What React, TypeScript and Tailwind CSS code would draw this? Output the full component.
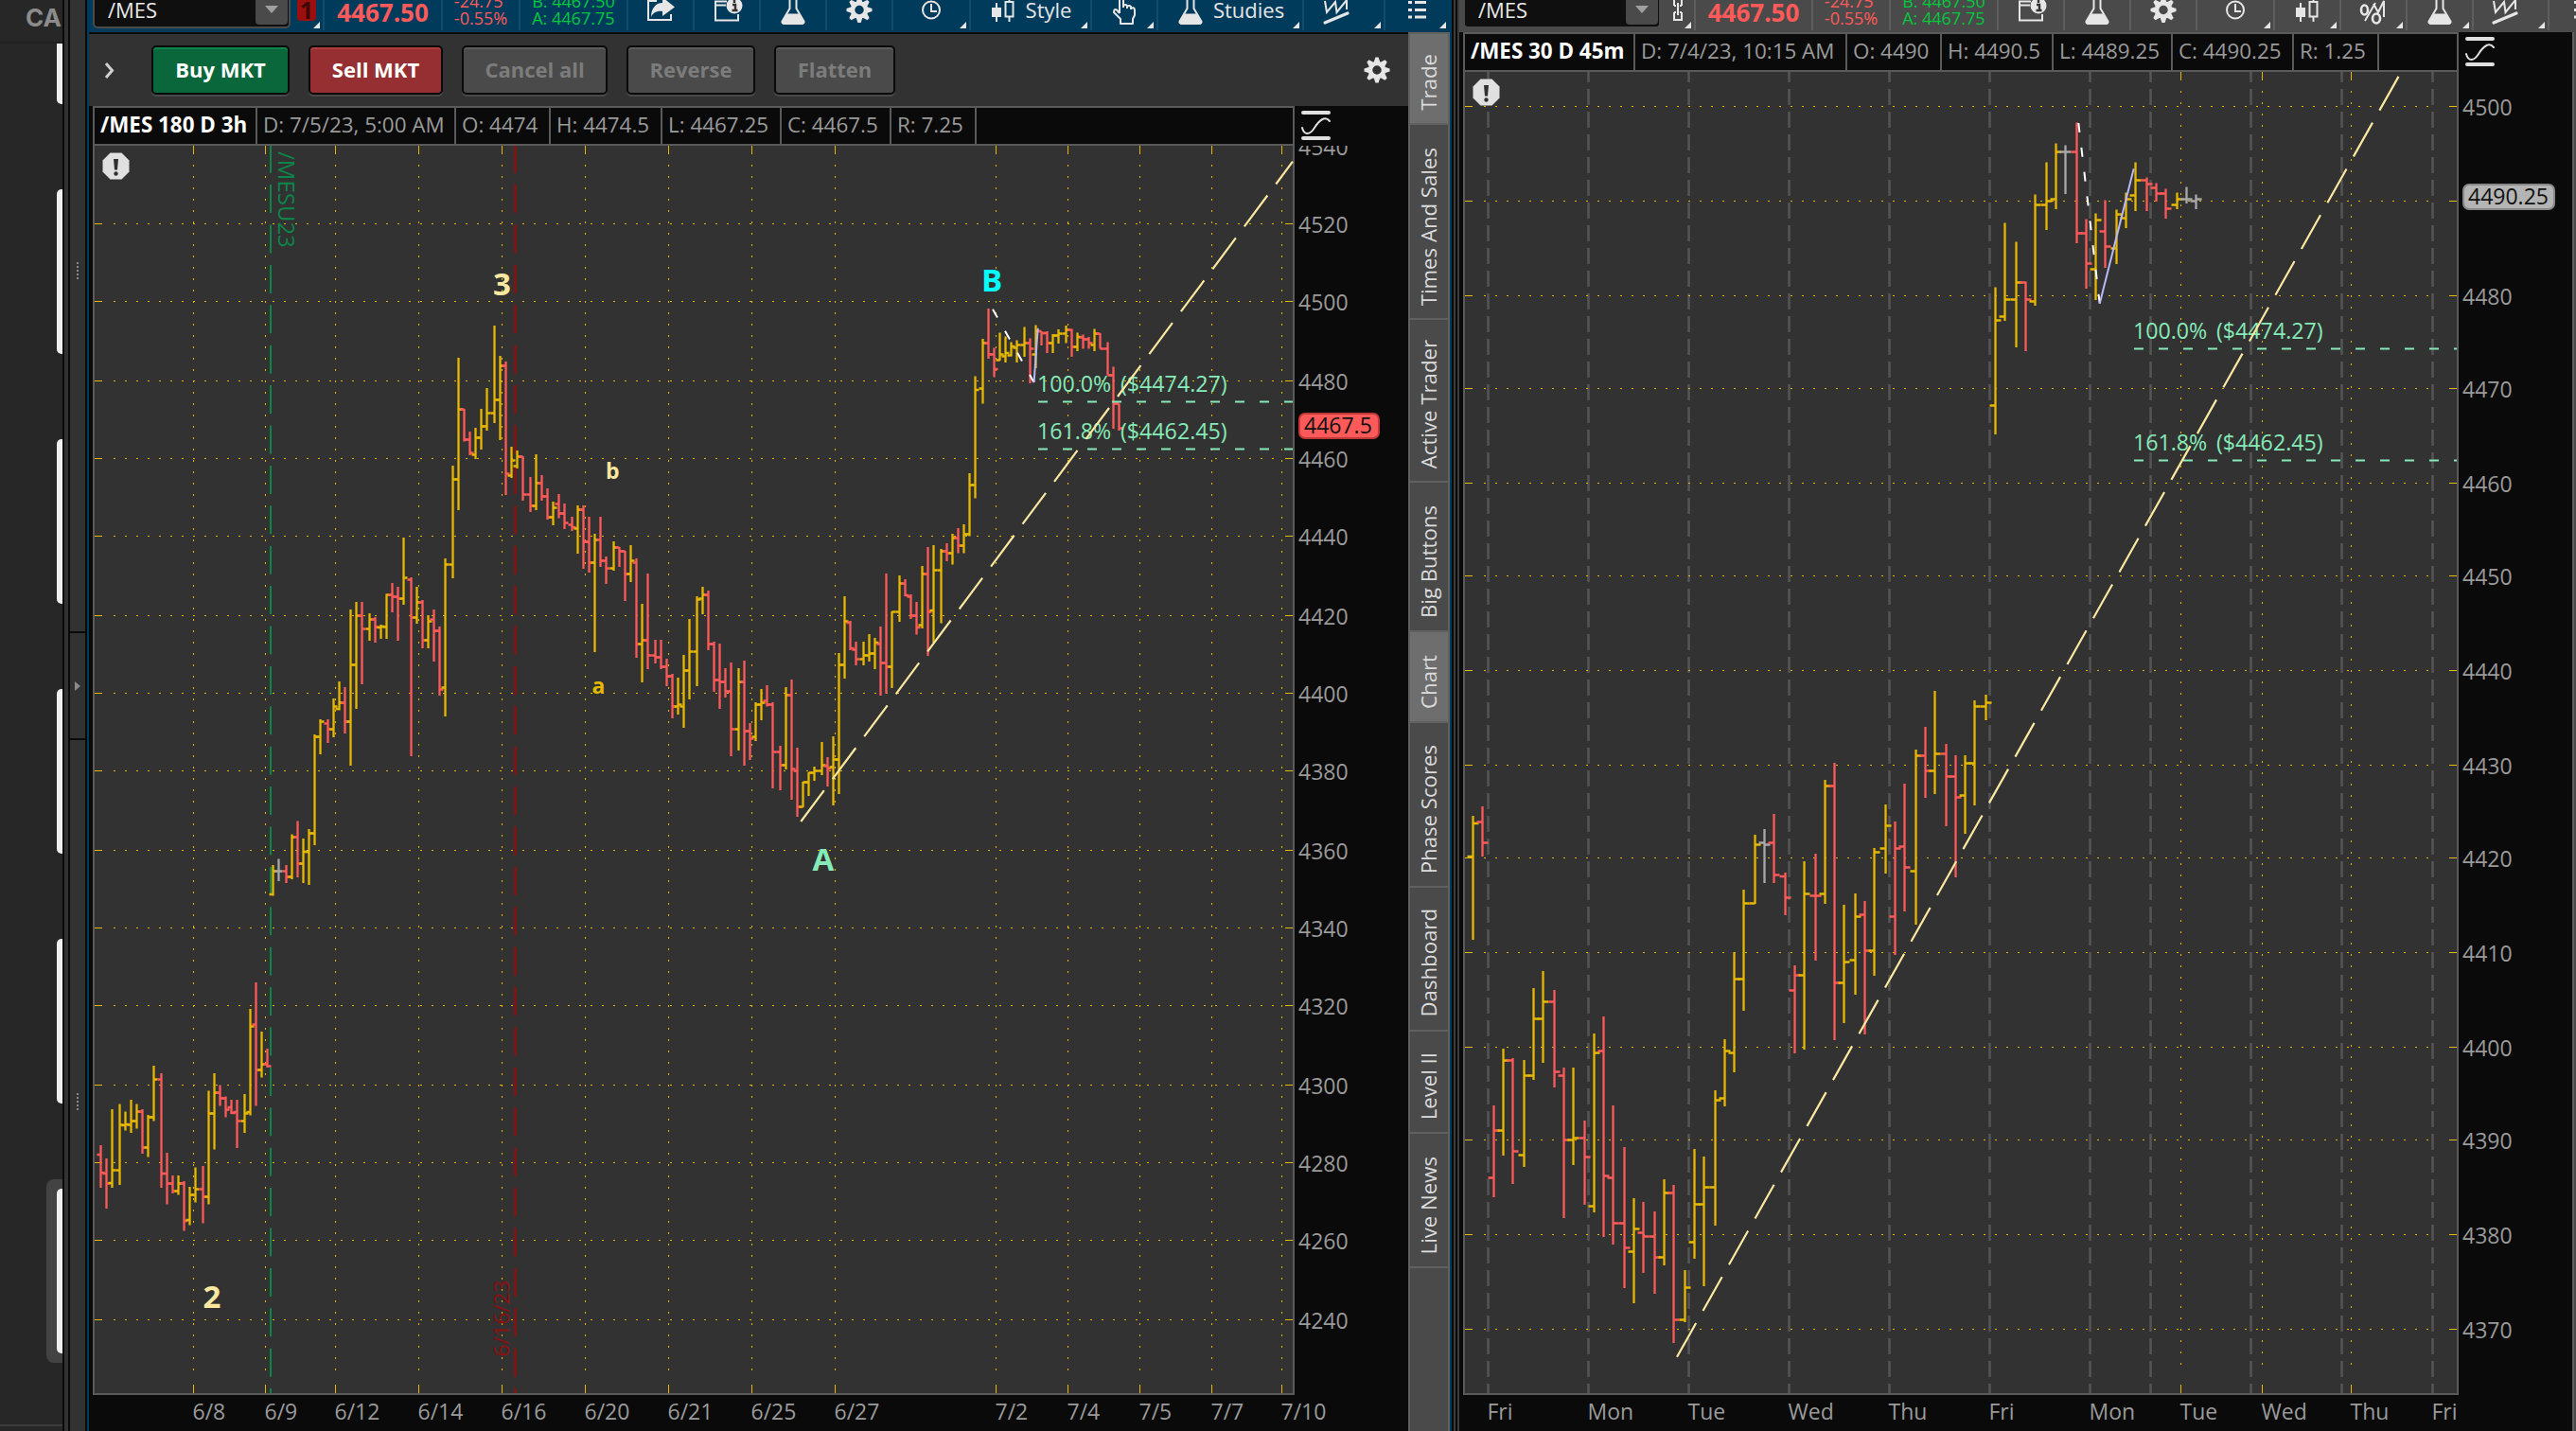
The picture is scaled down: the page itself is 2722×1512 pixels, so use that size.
import type { ReactNode } from 'react';
import clsx from 'clsx';

type Bar = [high: number, low: number, open: number, close: number];

interface GridLine {
	at: number;
	label?: string;
}

interface Line {
	x1: number;
	y1: number;
	x2: number;
	y2: number;
}

const YELLOW = '#e6b800';
const RED = '#ff5a5a';
const GRAY = '#a8a8a8';
const CREAM = '#fae8a0';
const MINT = '#86eab8';

const FONT = 'Open Sans, Noto Sans, sans-serif';

// Three hour bars, /MES 180 D
const bars3h: Bar[] = [
	[1210, 1255, 1220, 1239], [1224, 1277, 1240, 1250.5], [1172, 1255, 1250, 1236.5], [1166.5, 1252, 1236.5, 1188.5],
	[1174.5, 1194.5, 1189, 1188], [1162, 1197, 1188.5, 1184.5], [1166.5, 1192.5, 1184.5, 1174.5], [1172, 1219, 1174.5, 1212.5],
	[1178, 1222.5, 1212.5, 1180.5], [1126, 1184.5, 1180.5, 1140.5], [1134, 1255, 1140.5, 1240], [1218, 1272.5, 1240, 1250.5],
	[1242, 1261, 1250.5, 1258.5], [1242, 1262.5, 1258.5, 1250.5], [1248, 1300.5, 1250.5, 1290], [1254, 1294.5, 1289, 1262.5],
	[1233.5, 1270.5, 1262.5, 1256.5], [1232, 1292.5, 1256.5, 1264.5], [1152.5, 1272.5, 1264.5, 1176.5], [1134, 1214.5, 1176.5, 1154.5],
	[1146.5, 1168.5, 1154.5, 1160.5], [1158.5, 1180.5, 1160.5, 1172.5], [1162, 1177, 1170, 1176], [1162, 1213, 1175, 1184.5],
	[1156, 1197, 1184.5, 1176.5], [1066, 1178.5, 1175, 1084.5], [1038, 1168.5, 1082.5, 1130.5], [1090, 1138.5, 1130.5, 1124.5],
	[1108, 1128, 1124.5, 1126.5], [914, 946.5, 945, 920.5], [907.5, 931, 920.5, 920.5], [914, 933, 920.5, 926.5],
	[881.5, 929, 926.5, 884.5], [867.5, 927, 884.5, 912.5], [886, 933, 912.5, 900], [876, 935, 900, 880.5],
	[776, 893, 880.5, 778.5], [760, 797, 778.5, 762.5], [760, 785, 764.5, 770.5], [738, 779, 770.5, 746.5],
	[720, 750.5, 749, 742.5], [726, 775, 742.5, 762.5], [644, 809, 762.5, 702.5], [636, 749, 702.5, 650.5],
	[636, 723, 650.5, 664.5], [648, 677, 664.5, 654.5], [652, 679, 654.5, 662.5], [660, 675, 663, 662],
	[627.5, 675, 662.5, 628.5], [616, 647, 628.5, 630.5], [620, 677, 630.5, 632.5], [568, 639, 632.5, 610.5],
	[610, 799, 612.5, 652.5], [620, 659, 652.5, 636.5], [634, 685, 636.5, 676.5], [650, 685, 676.5, 656.5],
	[644, 699, 654.5, 666.5], [662, 735, 666.5, 728.5], [590, 757, 726.5, 596.5], [492, 611, 596.5, 506.5],
	[378, 539, 506.5, 432.5], [432, 466.5, 432.5, 464.5], [456, 481, 464.5, 478.5], [452, 485, 480.5, 462.5],
	[432, 475, 462.5, 450.5], [410, 455, 450.5, 436.5], [344, 447, 436.5, 422.5], [376, 465, 422.5, 386.5],
	[382, 523, 386.5, 500.5], [472, 505, 502.5, 486.5], [476, 495, 492.5, 482.5], [482, 529, 482.5, 522.5],
	[504, 541, 522.5, 534.5], [480, 539, 534.5, 510.5], [502, 529, 510.5, 524.5], [516, 549, 524.5, 546.5],
	[530, 555, 546.5, 536.5], [522, 547.5, 532.5, 542.5], [532, 559, 542.5, 552.5], [546, 561, 554.5, 557],
	[534, 585, 558.5, 538.5], [534, 601, 538.5, 572.5], [546, 605, 572.5, 594.5], [564, 689, 594.5, 570.5],
	[546, 599, 570.5, 592.5], [588, 617, 592.5, 600.5], [572, 603, 600.5, 578.5], [578, 599, 578.5, 582.5],
	[582, 635, 582.5, 606.5], [576, 615, 606.5, 592.5], [590, 695, 594.5, 680.5], [638, 721, 680.5, 676.5],
	[606, 707, 676.5, 692.5], [676, 701, 692.5, 694.5], [676, 707, 694.5, 704.5], [696, 725, 704.5, 714.5],
	[712, 759, 714.5, 746.5], [716, 755, 746.5, 744.5], [692, 769, 746.5, 708.5], [654, 739, 708.5, 688.5],
	[630, 725, 688.5, 633.5], [620, 649, 632.5, 628.5], [624, 687, 628.5, 680.5], [678, 731, 680.5, 718.5],
	[680, 749, 718.5, 720.5], [706, 737, 720.5, 730.5], [700, 799, 730.5, 770.5], [706, 793, 770.5, 720.5],
	[698, 809, 720.5, 772.5], [764, 803, 772.5, 780.5], [742, 783, 778.5, 744.5], [728, 761, 744.5, 742.5],
	[724, 746.5, 740.5, 744.5], [742, 833, 744.5, 794.5], [788, 835, 794.5, 808.5], [726, 813, 808.5, 734.5],
	[718, 845, 734.5, 812.5], [790, 863, 814.5, 852.5], [826, 853, 852.5, 826.5], [816, 841, 826.5, 816.5],
	[810, 825, 816.5, 814.5], [784, 819, 814.5, 808.5], [800, 831, 809.5, 812], [778, 851, 810.5, 802.5],
	[690, 839, 802.5, 702.5], [630, 717, 702.5, 656.5], [656, 687, 658, 685], [678, 703, 686.5, 696.5],
	[678, 703, 696.5, 692.5], [670, 699, 692.5, 690.5], [674, 707, 690.5, 679], [662, 735, 680.5, 700.5],
	[606, 733, 700.5, 704.5], [646, 727, 704.5, 646.5], [608, 657, 646.5, 616.5], [612, 630, 616.5, 629],
	[628, 654, 630.5, 650.5], [636, 670.5, 650.5, 663], [598, 664, 660.5, 606.5], [578, 693, 606.5, 646.5],
	[576, 679, 645, 602.5], [580, 658.5, 602.5, 582.5], [574, 593, 582.5, 584.5], [564, 596.5, 584.5, 568.5],
	[558, 584.5, 568.5, 576.5], [554, 584.5, 576.5, 564.5], [500, 566.5, 564.5, 512.5], [397.5, 526.5, 512.5, 412],
	[358, 426.5, 410.5, 362.5], [326, 379, 362.5, 374.5], [367.5, 398.5, 374.5, 390], [351.5, 381, 380.5, 374.5],
	[355.5, 383, 376.5, 373], [361.5, 376.5, 375.5, 366], [359.5, 383, 367.5, 364.5], [345.5, 377, 364.5, 362.5],
	[357.5, 405, 362.5, 368.5], [343.5, 389, 374.5, 350], [350, 365, 350, 352], [350, 373, 352, 362.5],
	[353, 373, 362.5, 354.5], [348, 363, 354.5, 352.5], [344, 362.5, 352.5, 348.5], [347.5, 377, 348.5, 366.5],
	[351.5, 371, 366.5, 356], [353.5, 368.5, 356.5, 358.5], [356, 368.5, 358.5, 362.5], [347.5, 371, 364.5, 352.5],
	[352, 368.5, 352.5, 368.5], [361.5, 396.5, 368.5, 396.5], [387.5, 453, 396.5, 426.5], [426.5, 455, 426.5, 452.5]
];

// 45 minute bars, /MES 30 D
const bars45m: Bar[] = [
	[862, 993, 905, 870], [852, 905, 868.5, 890.5], [1168, 1265, 1244.5, 1194.5], [1108, 1221, 1194.5, 1120.5],
	[1118, 1251, 1120.5, 1216.5], [1120, 1233, 1220.5, 1136.5], [1044, 1141, 1136.5, 1076.5], [1026, 1123, 1076.5, 1058.5],
	[1046, 1149, 1058.5, 1132.5], [1128, 1287, 1136.5, 1204.5], [1128, 1231, 1204.5, 1202.5], [1184, 1273, 1202.5, 1222.5],
	[1092, 1281, 1274.5, 1112.5], [1074, 1307, 1110.5, 1242.5], [1168, 1315, 1244.5, 1292.5], [1212, 1361, 1292.5, 1318.5],
	[1266, 1377, 1322.5, 1298.5], [1270, 1345, 1302.5, 1306.5], [1280, 1367, 1306.5, 1328.5], [1246, 1337, 1328.5, 1260.5],
	[1252, 1419, 1260.5, 1394.5], [1342, 1397, 1394.5, 1360.5], [1214, 1330, 1312.5, 1272.5], [1222, 1359, 1272.5, 1254.5],
	[1152, 1295, 1254.5, 1162.5], [1098, 1169, 1160.5, 1110.5], [1006, 1133, 1112.5, 1034.5], [940, 1068, 1034.5, 954.5],
	[882, 955, 954.5, 892.5], [876, 933, 890.5, 892.5], [860, 933, 890.5, 924.5], [922, 967, 926, 948.5],
	[1020, 1113, 1046.5, 1030.5], [910, 1109, 1030.5, 944.5], [902, 1015, 946.5, 946.5], [824, 955, 944.5, 830.5],
	[806, 1099, 830.5, 1038.5], [956, 1081, 1038.5, 1016.5], [944, 1051, 1014.5, 968.5], [952, 1093, 966.5, 1004.5],
	[896, 1031, 1004.5, 900.5], [850, 923, 896.5, 872.5], [868, 1009, 968.5, 896.5], [828, 963, 894.5, 916.5],
	[792, 977, 920.5, 798.5], [768, 843, 798.5, 814.5], [730, 839, 814.5, 796.5], [786, 873, 796.5, 820.5],
	[798, 927, 820.5, 842.5], [798, 881, 840.5, 806.5], [740, 851, 806.5, 746.5], [734, 761, 746.5, 742.5],
	[303.5, 459, 428.5, 338.5], [235.5, 339, 334.5, 316.5], [255.5, 367, 316.5, 298.5], [297.5, 371, 298.5, 316.5],
	[205.5, 323, 318.5, 216.5], [171.5, 243, 216.5, 212.5], [151.5, 221, 210.5, 160.5], [153.5, 205, 160.5, 160.5],
	[129.5, 257, 160.5, 246.5], [231.5, 305, 246.5, 278.5], [225.5, 317, 284.5, 232.5], [211.5, 283, 244.5, 260.5],
	[221.5, 279, 262.5, 226.5], [203.5, 241, 230.5, 210.5], [171.5, 223, 206.5, 190.5], [187.5, 223, 190.5, 194.5],
	[193.5, 213, 198.5, 204.5], [199.5, 231, 204.5, 220.5], [203.5, 221, 216.5, 210.5], [197.5, 215, 210.5, 210.5],
	[205.5, 221, 212.5, 210.5]
];

const prices3h: GridLine[] = [
	{ at: 236, label: '4520' },
	{ at: 318, label: '4500' },
	{ at: 402, label: '4480' },
	{ at: 484, label: '4460' },
	{ at: 566, label: '4440' },
	{ at: 650, label: '4420' },
	{ at: 732, label: '4400' },
	{ at: 814, label: '4380' },
	{ at: 898, label: '4360' },
	{ at: 980, label: '4340' },
	{ at: 1062, label: '4320' },
	{ at: 1146, label: '4300' },
	{ at: 1228, label: '4280' },
	{ at: 1310, label: '4260' },
	{ at: 1394, label: '4240' }
];

const dates3h: GridLine[] = [
	{ at: 204, label: '6/8' },
	{ at: 280, label: '6/9' },
	{ at: 354, label: '6/12' },
	{ at: 442, label: '6/14' },
	{ at: 530, label: '6/16' },
	{ at: 618, label: '6/20' },
	{ at: 706, label: '6/21' },
	{ at: 794, label: '6/25' },
	{ at: 882, label: '6/27' },
	{ at: 1052, label: '7/2' },
	{ at: 1128, label: '7/4' },
	{ at: 1204, label: '7/5' },
	{ at: 1280, label: '7/7' },
	{ at: 1354, label: '7/10' }
];

const prices45m: GridLine[] = [
	{ at: 112, label: '4500' },
	{ at: 212 },
	{ at: 312, label: '4480' },
	{ at: 410, label: '4470' },
	{ at: 510, label: '4460' },
	{ at: 608, label: '4450' },
	{ at: 708, label: '4440' },
	{ at: 808, label: '4430' },
	{ at: 906, label: '4420' },
	{ at: 1006, label: '4410' },
	{ at: 1106, label: '4400' },
	{ at: 1204, label: '4390' },
	{ at: 1304, label: '4380' },
	{ at: 1404, label: '4370' }
];

const sessions45m = [1572, 1678, 1784, 1890, 1996, 2102, 2208, 2272, 2378, 2474, 2570];
const days45m: GridLine[] = [
	{ at: 1572, label: 'Fri' },
	{ at: 1678, label: 'Mon' },
	{ at: 1784, label: 'Tue' },
	{ at: 1890, label: 'Wed' },
	{ at: 1996, label: 'Thu' },
	{ at: 2102, label: 'Fri' },
	{ at: 2208, label: 'Mon' },
	{ at: 2304, label: 'Tue' },
	{ at: 2390, label: 'Wed' },
	{ at: 2484, label: 'Thu' },
	{ at: 2570, label: 'Fri' }
];

function barColor(close: number, previous: number) {
	if (close === previous) return GRAY;
	return close < previous ? YELLOW : RED;
}

/* ---------- chart parts ---------- */

function OhlcBars({ bars, start, step, tick }: { bars: Bar[]; start: number; step: number; tick: number }) {
	return (
		<g strokeWidth={2.3}>
			{bars.map(([high, low, open, close], i) => {
				const x = 2 * Math.floor((start + step * i) / 2) + 0.5;
				const previous = i === 0 ? open : bars[i - 1][3];
				return (
					<path
						key={i}
						d={`M${x} ${high}V${low}M${x - tick} ${open}H${x}M${x} ${close}H${x + tick}`}
						stroke={barColor(close, previous)}
					/>
				);
			})}
		</g>
	);
}

function PriceGrid({ lines, left, right, dotStart, dotEnd }: { lines: GridLine[]; left: number; right: number; dotStart: number; dotEnd: number }) {
	return (
		<g stroke={YELLOW}>
			{lines.map(({ at, label }) => (
				<g key={at}>
					<path d={`M${left} ${at + 0.5}h8M${right - 8} ${at + 0.5}h8`} />
					<path d={`M${dotStart} ${at + 0.5}H${dotEnd}`} strokeDasharray="2 10" />
					{label && (
						<text x={right + 6} y={at + 9.5} fill="#9a9a9a" stroke="none">
							{label}
						</text>
					)}
				</g>
			))}
		</g>
	);
}

function TimeGrid({ at, top, dotStart, dotEnd }: { at: number[]; top: number; dotStart: number; dotEnd: number }) {
	return (
		<g stroke={YELLOW}>
			{at.map((x) => (
				<g key={x}>
					<path d={`M${x + 0.5} ${top}v9M${x + 0.5} 1463v9`} />
					<path d={`M${x + 0.5} ${dotStart}V${dotEnd}`} strokeDasharray="2 10" />
				</g>
			))}
		</g>
	);
}

function TimeLabels({ lines }: { lines: GridLine[] }) {
	return (
		<g fill="#9a9a9a">
			{lines.map(({ at, label }) => (
				<text key={at} x={at - 0.5} y={1500}>
					{label}
				</text>
			))}
		</g>
	);
}

function TrendLine({ x1, y1, x2, y2 }: Line) {
	return <line x1={x1} y1={y1} x2={x2} y2={y2} stroke={CREAM} strokeWidth={2.2} strokeDasharray="41 15" />;
}

function FibLevel({ x, y, right, percent, price }: { x: number; y: number; right: number; percent: string; price: string }) {
	return (
		<g>
			<text x={x - 1} y={y - 10.5} fontSize={23.2} fill={MINT}>
				{percent}
			</text>
			<text x={x + 87} y={y - 10.5} fontSize={23.2} fill={MINT}>
				({price})
			</text>
			<path d={`M${x} ${y}H${right}`} stroke={MINT} strokeWidth={2} strokeDasharray="10 16" />
		</g>
	);
}

function Warning({ x, y }: { x: number; y: number }) {
	return (
		<g transform={`translate(${x} ${y})`}>
			<path d="M-6-14H6L14-6V6L6 14H-6L-14 6V-6Z" fill="#e0e0e0" />
			<path d="M-2.5-7.5h5L1.5 4h-3z" fill="#303030" />
			<circle cy={8} r={2.2} fill="#303030" />
		</g>
	);
}

function ScaleIcon({ x, y }: { x: number; y: number }) {
	return (
		<g transform={`translate(${x} ${y})`} fill="none" stroke="#e0e0e0" strokeLinecap="round">
			<path d="M2 2H29M2 29H29" strokeWidth={4} />
			<path d="M1 18C3 26 9 26 14 18S25 5 30 11" strokeWidth={2} />
		</g>
	);
}

function Chart3h() {
	return (
		<svg width={1394} height={1358} viewBox="94 154 1394 1358" fontFamily={FONT} fontSize={23} className="block">
			<rect x={94} y={154} width={1394} height={1358} fill="#0a0a0a" />
			<rect x={98} y={152} width={1270} height={1322} fill="#5a5a5a" />
			<rect x={100} y={154} width={1266} height={1318} fill="#323232" />
			<text x={1372} y={163.5} fill="#9a9a9a">
				4540
			</text>
			<PriceGrid lines={prices3h} left={100} right={1366} dotStart={120} dotEnd={1348} />
			<TimeGrid at={dates3h.map((d) => d.at)} top={154} dotStart={174} dotEnd={1448} />
			<TimeLabels lines={dates3h} />

			<path d="M286 152.7V1472" stroke="#0c854a" strokeWidth={2} strokeDasharray="30 12.4" />
			<path d="M544.5 152.7V1472" stroke="#8b1010" strokeWidth={2.5} strokeDasharray="30 12.4" />
			<text transform="translate(294 160) rotate(90)" fontSize={24} fill="#0c854a">
				/MESU23
			</text>
			<text transform="translate(537.5 1433.5) rotate(-90)" fontSize={22.5} fill="#8b1010">
				6/16/23
			</text>

			<OhlcBars bars={bars3h} start={107.14} step={6.29} tick={4} />

			<FibLevel x={1097} y={424.5} right={1366} percent="100.0%" price="$4474.27" />
			<FibLevel x={1097} y={474.5} right={1366} percent="161.8%" price="$4462.45" />
			<TrendLine x1={846.3} y1={868} x2={1366} y2={170.7} />
			<path d="M1049 326.7L1092.6 404" stroke="#fff" strokeWidth={2} strokeDasharray="10 16.5" />
			<path d="M1092.6 404L1096.7 346.7" stroke="#b8b8fa" strokeWidth={2} />

			<g fontWeight={700} fontSize={33}>
				<text x={214.5} y={1382} fill={CREAM}>2</text>
				<text x={521} y={312} fill={CREAM}>3</text>
				<text x={1037} y={307.5} fill="#00ffff">B</text>
				<text x={858.5} y={920} fill={MINT}>A</text>
				<text x={625.5} y={733} fontSize={23} fill={YELLOW}>a</text>
				<text x={640} y={506} fontSize={23} fill={CREAM}>b</text>
			</g>

			<Warning x={122.5} y={175.5} />
			<rect x={1373} y={437} width={84} height={26} rx={6} fill="#ff5a5a" stroke="#c03838" strokeWidth={2} />
			<text x={1378} y={457.5} fill="#111">
				4467.5
			</text>
		</svg>
	);
}

function Chart45m() {
	return (
		<svg width={1176} height={1436} viewBox="1542 76 1176 1436" fontFamily={FONT} fontSize={23} className="block">
			<rect x={1542} y={76} width={1176} height={1436} fill="#0a0a0a" />
			<rect x={1546} y={74} width={1052} height={1400} fill="#5a5a5a" />
			<rect x={1548} y={76} width={1048} height={1396} fill="#323232" />
			{sessions45m.map((x) => (
				<path key={x} d={`M${x + 0.5} 76V1472`} stroke="#555" strokeWidth={2.5} strokeDasharray="17 7" strokeDashoffset={6} />
			))}
			<PriceGrid lines={prices45m} left={1548} right={2596} dotStart={1568} dotEnd={2566} />
			<TimeGrid at={[2304, 2390, 2484]} top={76} dotStart={96} dotEnd={1442} />
			<TimeLabels lines={days45m} />

			<OhlcBars bars={bars45m} start={1557.378} step={10.611} tick={6} />

			<FibLevel x={2255} y={368.5} right={2596} percent="100.0%" price="$4474.27" />
			<FibLevel x={2255} y={486.5} right={2596} percent="161.8%" price="$4462.45" />
			<TrendLine x1={1772} y1={1433.8} x2={2535} y2={80} />
			<path d="M2196.3 130L2218.7 320.7" stroke="#fff" strokeWidth={2} strokeDasharray="10 16" />
			<path d="M2218.7 320.7L2254.7 178.3" stroke="#b8b8fa" strokeWidth={2} />

			<Warning x={1570.5} y={97.5} />
			<rect x={2603} y={195} width={96} height={26} rx={6} fill="#b4b4b4" stroke="#888" strokeWidth={2} />
			<text x={2608} y={215.5} fill="#111">
				4490.25
			</text>
		</svg>
	);
}

/* ---------- toolbar icons ---------- */

function Icon({ width = 34, children }: { width?: number; children: ReactNode }) {
	return (
		<svg width={width} height={34} viewBox={`0 0 ${width} 34`} fill="none" stroke="#e6e6e6" strokeWidth={2} className="shrink-0">
			{children}
		</svg>
	);
}

function ShareIcon() {
	return (
		<Icon>
			<path d="M13 1H4V21H28V15" />
			<path d="M19-3L32 7.5 19 17V12C14 11 9 13 7 18 7 9 12 3 19 3Z" fill="#e6e6e6" stroke="none" />
		</Icon>
	);
}

function NoteIcon() {
	return (
		<Icon>
			<path d="M17 1.5H5V21.5H29V15M5 5.5H16" />
			<circle cx={25} cy={6} r={8.5} fill="#e6e6e6" stroke="none" />
			<path d="M23 5H26V11M22.5 11H28.5M25 0V3" stroke="#333" strokeWidth={2.4} />
		</Icon>
	);
}

function FlaskIcon() {
	return (
		<Icon width={28}>
			<path d="M10.5-2V9L2.5 22.5Q2 25 5 25H23Q26 25 25.5 22.5L17.5 9V-2" />
			<path d="M8 14.5H20L26 23.5 24 26H4L2 23.5Z" fill="#e6e6e6" stroke="none" />
		</Icon>
	);
}

function GearShape() {
	return (
		<>
			<circle r={7} strokeWidth={4.5} />
			{[0, 45, 90, 135, 180, 225, 270, 315].map((angle) => (
				<path key={angle} d="M-3.6-7.5L-1.6-13.5H1.6L3.6-7.5Z" transform={`rotate(${angle})`} fill="#e6e6e6" stroke="none" />
			))}
		</>
	);
}

function GearIcon() {
	return (
		<Icon>
			<g transform="translate(17 10.5)">
				<GearShape />
			</g>
		</Icon>
	);
}

function ClockIcon() {
	return (
		<Icon>
			<circle cx={17} cy={10.5} r={9} />
			<path d="M17 4V12H23" />
		</Icon>
	);
}

function CandlesIcon() {
	return (
		<Icon width={24}>
			<path d="M5 3V23M18.5-2V2M18.5 18V23M14.5 2H22.5V17.5H14.5Z" />
			<path d="M0 8H10V18H0Z" fill="#e6e6e6" stroke="none" />
		</Icon>
	);
}

function HandIcon() {
	return (
		<Icon width={26}>
			<path
				d="M8 14V0Q8-2 10-2T12 0V8M12 8V6Q14 4 16 6V9M16 8V7Q18 5 20 7V10M20 9Q24 7 24 11V16L22 20V25H9V20L2 13Q2 9 5 10.5L8 14"
				strokeLinejoin="round"
			/>
		</Icon>
	);
}

function DrawingsIcon() {
	return (
		<Icon width={30}>
			<path d="M3 1L5 13 14 2 15.5 13 26 0V10" />
			<path d="M3 24L27 14" strokeWidth={3.2} strokeLinecap="round" />
		</Icon>
	);
}

function PercentIcon() {
	return (
		<Icon width={30}>
			<ellipse cx={5.5} cy={10.5} rx={3.5} ry={5} strokeWidth={2.6} />
			<ellipse cx={18} cy={19.5} rx={4} ry={5} strokeWidth={2.6} />
			<path d="M17 3L6 22M15 4L20 13 26 1V18" />
		</Icon>
	);
}

function ListIcon() {
	return (
		<Icon width={22}>
			<path d="M1 2.5H5M8 2.5H20M1 10.5H5M8 10.5H20M1 18H5M8 18H20" strokeWidth={3} />
		</Icon>
	);
}

function LinkIcon() {
	return (
		<Icon width={14}>
			<path d="M3 6V-2M11 6V-2M3 6H5M11 6H9M3 13V21H11V13M3 13H5M11 13H9M7 3V16" />
		</Icon>
	);
}

/* ---------- toolbars ---------- */

function Cell({ className, menu, children }: { className?: string; menu?: boolean; children?: ReactNode }) {
	return (
		<div className={clsx('relative flex h-[32px] shrink-0 items-start justify-center border-r-2', className)}>
			{children}
			{menu && (
				<svg width={8} height={8} className="absolute top-[23px] right-[3px]">
					<path d="M8 0V7H1Z" fill="#e6e6e6" />
				</svg>
			)}
		</div>
	);
}

function SymbolInput() {
	return (
		<div className="flex h-[30px] w-[209px] shrink-0 rounded-b-[5px] border-2 border-t-0 border-[#4a4a4a] bg-[#0f0f0f]">
			<span className="w-[170px] -translate-y-[6px] pl-3.5 text-[22px] leading-[32px] text-[#e8e8e8]">/MES</span>
			<div className="flex h-[26px] w-[34px] justify-center rounded-b-[4px] bg-[#4a4a4a]">
				<svg width={16} height={16}>
					<path d="M1 6H15L8 14Z" fill="#a0a0a0" />
				</svg>
			</div>
		</div>
	);
}

function LastPrice() {
	return <span className="-translate-y-[6px] text-[26px] leading-[38px] font-bold text-[#ff5a5a]">4467.50</span>;
}

function Change() {
	return (
		<div className="-translate-y-[11px] text-[18px] leading-[18px] text-[#ff5a5a]">
			<div className="pt-[3px]">-24.75</div>
			<div>-0.55%</div>
		</div>
	);
}

function BidAsk() {
	return (
		<div className="-translate-y-[11px] text-[18px] leading-[18px] text-[#00c83c]">
			<div className="pt-[3px]">B: 4467.50</div>
			<div>A: 4467.75</div>
		</div>
	);
}

function ActiveToolbar() {
	const line = 'border-[#124c6b]';
	return (
		<div className="flex h-[34px] overflow-hidden bg-[#003b5c] pl-1">
			<SymbolInput />
			<Cell className={clsx('w-[36px]', line)} menu>
				<div className="h-[22px] w-5 overflow-hidden rounded-b-[4px] bg-[#9b0f0f] text-center text-[25px] leading-[20px] font-bold text-[#3c0808]">1</div>
			</Cell>
			<Cell className={clsx('w-[125px]', line)}><LastPrice /></Cell>
			<Cell className={clsx('w-[82px]', line)}><Change /></Cell>
			<Cell className={clsx('w-[114px]', line)}><BidAsk /></Cell>
			<Cell className={clsx('w-[70px]', line)}><ShareIcon /></Cell>
			<Cell className={clsx('w-[70px]', line)}><NoteIcon /></Cell>
			<Cell className={clsx('w-[70px]', line)}><FlaskIcon /></Cell>
			<Cell className={clsx('w-[70px]', line)}><GearIcon /></Cell>
			<Cell className={clsx('w-[82px]', line)} menu><ClockIcon /></Cell>
			<Cell className={clsx('w-[128px] gap-3 pl-0.5', line)} menu>
				<CandlesIcon />
				<span className="-translate-y-[6px] text-[22px] leading-[32px] text-[#e6e6e6]">Style</span>
			</Cell>
			<Cell className={clsx('w-[70px]', line)} menu><HandIcon /></Cell>
			<Cell className={clsx('w-[154px] gap-2.5 pl-px', line)} menu>
				<FlaskIcon />
				<span className="-translate-y-[6px] text-[22px] leading-[32px] text-[#e6e6e6]">Studies</span>
			</Cell>
			<Cell className={clsx('w-[86px] pr-4', line)} menu><DrawingsIcon /></Cell>
			<Cell className="w-[69px] border-transparent" menu><ListIcon /></Cell>
		</div>
	);
}

function SecondToolbar() {
	const line = 'border-[#5e5e5e]';
	return (
		<div className="flex h-[34px] overflow-hidden bg-[#4a4a4a] pl-1">
			<SymbolInput />
			<Cell className={clsx('w-[37px]', line)} menu><LinkIcon /></Cell>
			<Cell className={clsx('w-[124px]', line)}><LastPrice /></Cell>
			<Cell className={clsx('w-[82px]', line)}><Change /></Cell>
			<Cell className={clsx('w-[114px]', line)}><BidAsk /></Cell>
			<Cell className={clsx('w-[70px]', line)}><NoteIcon /></Cell>
			<Cell className={clsx('w-[70px]', line)}><FlaskIcon /></Cell>
			<Cell className={clsx('w-[70px]', line)}><GearIcon /></Cell>
			<Cell className={clsx('w-[82px]', line)} menu><ClockIcon /></Cell>
			<Cell className={clsx('w-[70px]', line)} menu><CandlesIcon /></Cell>
			<Cell className={clsx('w-[70px]', line)} menu><PercentIcon /></Cell>
			<Cell className={clsx('w-[70px]', line)} menu><FlaskIcon /></Cell>
			<Cell className={clsx('w-[80px] pr-3', line)} menu><DrawingsIcon /></Cell>
			<div className="pl-[25px]"><ListIcon /></div>
		</div>
	);
}

const actionStyle = 'flex h-[52px] items-center justify-center rounded-[5px] border-2 border-[#0a0a0a] pb-0.5 text-[22px] font-bold shadow-[0_2px_0_#484848]';
const mutedStyle = 'bg-[#4a4a4a] text-[#7c7c7c] inset-shadow-[0_2px_0_#5c5c5c]';

function TradeBar() {
	return (
		<div className="flex h-[78px] w-[1394px] items-start border-t-2 border-[#0a0a0a] bg-[#323232] pt-3 pl-[15px]">
			<svg width={14} height={50} fill="none" stroke="#d0d0d0" strokeWidth={3}>
				<path d="M3 19L9.5 26.5 3 34" />
			</svg>
			<button className={clsx(actionStyle, 'ml-[37px] w-[146px] bg-[#0a673c] text-white inset-shadow-[0_2px_0_#0f854e]')}>Buy MKT</button>
			<button className={clsx(actionStyle, 'ml-5 w-[142px] bg-[#962f31] text-white inset-shadow-[0_2px_0_#b03c3e]')}>Sell MKT</button>
			<button className={clsx(actionStyle, mutedStyle, 'ml-5 w-[154px]')}>Cancel all</button>
			<button className={clsx(actionStyle, mutedStyle, 'ml-5 w-[136px]')}>Reverse</button>
			<button className={clsx(actionStyle, mutedStyle, 'ml-5 w-[128px]')}>Flatten</button>
			<svg width={30} height={30} viewBox="-15 -15 30 30" fill="none" stroke="#e6e6e6" className="mt-[11px] mr-[18px] ml-auto">
				<GearShape />
			</svg>
		</div>
	);
}

function ChartHeader({ title, cells, widths, icon }: { title: string; cells: string[]; widths: string[]; icon: ReactNode }) {
	return (
		<div className="flex h-[42px] bg-[#0a0a0a] pl-1">
			<div className="flex grow border-y-2 border-l-2 border-[#5a5a5a] text-[22.4px] leading-[35px] whitespace-nowrap text-[#9a9a9a]">
				<div className={clsx('shrink-0 border-r-2 border-[#5a5a5a] pl-1.5 font-bold text-white', widths[0])}>{title}</div>
				{cells.map((cell, i) => (
					<div key={cell} className={clsx('shrink-0 border-r-2 border-[#5a5a5a] pl-1.5', widths[i + 1])}>
						{cell}
					</div>
				))}
				<div className="grow border-r-2 border-[#5a5a5a]" />
			</div>
			{icon}
		</div>
	);
}

/* ---------- side panels ---------- */

const tabs = [
	{ name: 'Trade', height: 'h-[96px]', active: true },
	{ name: 'Times And Sales', height: 'h-[206px]' },
	{ name: 'Active Trader', height: 'h-[172px]' },
	{ name: 'Big Buttons', height: 'h-[158px]' },
	{ name: 'Chart', height: 'h-[96px]', active: true },
	{ name: 'Phase Scores', height: 'h-[174px]' },
	{ name: 'Dashboard', height: 'h-[152px]' },
	{ name: 'Level II', height: 'h-[108px]' },
	{ name: 'Live News', height: 'h-[142px]' }
];

function TabStrip() {
	return (
		<div className="flex w-[44px] flex-col border-x-2 border-t-2 border-[#606060] bg-[#4a4a4a]">
			{tabs.map(({ name, height, active }) => (
				<div
					key={name}
					className={clsx('flex shrink-0 items-end justify-center border-b-2 border-[#606060] pb-[13px]', height, active && 'bg-[#6e6e6e]')}
				>
					<span className="rotate-180 text-[22.2px] leading-[40px] text-[#dcdcdc] [writing-mode:vertical-rl]">{name}</span>
				</div>
			))}
		</div>
	);
}

function BrowserEdge() {
	return (
		<div className="flex h-full w-[66px] shrink-0 flex-col overflow-hidden bg-[#272727]">
			<div className="h-[46px] shrink-0 overflow-hidden border-b-2 border-[#202020] pl-[27px] font-[Inter] text-[26px] leading-[37px] font-bold text-[#8c8c8c]">CA</div>
			<div className="ml-auto h-[64px] w-1.5 shrink-0 rounded-bl-[5px] bg-[#efefef]" />
			<div className="mt-[90px] ml-auto h-[174px] w-1.5 shrink-0 rounded-l-[5px] bg-[#efefef]" />
			<div className="mt-[90px] ml-auto h-[174px] w-1.5 shrink-0 rounded-l-[5px] bg-[#efefef]" />
			<div className="mt-[90px] ml-auto h-[174px] w-1.5 shrink-0 rounded-l-[5px] bg-[#efefef]" />
			<div className="mt-[90px] ml-auto h-[174px] w-1.5 shrink-0 rounded-l-[5px] bg-[#efefef]" />
			<div className="mt-[80px] ml-auto h-[194px] w-[17px] shrink-0 rounded-l-[8px] bg-[#434343] py-2.5 pl-[11px]">
				<div className="h-full rounded-l-[5px] bg-[#efefef]" />
			</div>
			<div className="mt-auto h-[7px] shrink-0 border-t-2 border-[#3c3c3c]" />
		</div>
	);
}

function Grip() {
	return <div className="h-[18px] w-[2px] border-l-2 border-dotted border-[#8a8a8a]" />;
}

function Splitter() {
	return (
		<div className="flex w-[28px] shrink-0 border-l-2 border-[#0a0a0a] bg-[#323232]">
			<div className="w-1 shrink-0" />
			<div className="flex w-5 shrink-0 flex-col border-x-2 border-[#0a0a0a]">
				<div className="flex h-[669px] items-start justify-center border-b-2 border-[#0a0a0a] pt-[277px]"><Grip /></div>
				<div className="flex h-[113px] items-center justify-center border-b-2 border-[#0a0a0a]">
					<svg width={8} height={10}>
						<path d="M1 0L7 5 1 10Z" fill="#8a8a8a" />
					</svg>
				</div>
				<div className="flex grow items-start justify-center pt-[373px]"><Grip /></div>
			</div>
			<div className="w-[2px] shrink-0 bg-[#003b5c]" />
		</div>
	);
}

export default function App() {
	return (
		<div className="flex h-[1512px] w-[2722px] overflow-hidden bg-[#0a0a0a] font-['Open_Sans','Noto_Sans',sans-serif]">
			<BrowserEdge />
			<Splitter />

			<section className="flex w-[1440px] shrink-0 flex-col border-r-2 border-[#003b5c]">
				<ActiveToolbar />
				<div className="flex grow">
					<div className="w-[1394px] shrink-0">
						<TradeBar />
						<ChartHeader
							title="/MES 180 D 3h"
							cells={['D: 7/5/23, 5:00 AM', 'O: 4474', 'H: 4474.5', 'L: 4467.25', 'C: 4467.5', 'R: 7.25']}
							widths={['w-[172px]', 'w-[210px]', 'w-[100px]', 'w-[118px]', 'w-[126px]', 'w-[116px]', 'w-[90px]']}
							icon={
								<svg width={120} height={42} viewBox="1368 112 120 42" className="shrink-0">
									<ScaleIcon x={1375} y={117} />
								</svg>
							}
						/>
						<Chart3h />
					</div>
					<TabStrip />
				</div>
			</section>

			<div className="flex w-2 shrink-0 justify-end gap-0.5 border-l-2 border-[#0a0a0a]">
				<div className="w-0.5 bg-[#3c3c3c]" />
				<div className="w-0.5 bg-[#3c3c3c]" />
			</div>

			<section className="w-[1180px] shrink-0 overflow-hidden">
				<SecondToolbar />
				<div className="flex">
					<div className="w-[1176px] shrink-0">
						<ChartHeader
							title="/MES 30 D 45m"
							cells={['D: 7/4/23, 10:15 AM', 'O: 4490', 'H: 4490.5', 'L: 4489.25', 'C: 4490.25', 'R: 1.25']}
							widths={['w-[180px]', 'w-[224px]', 'w-[100px]', 'w-[118px]', 'w-[126px]', 'w-[128px]', 'w-[90px]']}
							icon={
								<svg width={120} height={42} viewBox="2598 34 120 42" className="shrink-0">
									<ScaleIcon x={2605} y={39} />
								</svg>
							}
						/>
						<Chart45m />
					</div>
					<div className="w-1 border-l-2 border-[#606060] bg-[#4a4a4a]" />
				</div>
			</section>
		</div>
	);
}
